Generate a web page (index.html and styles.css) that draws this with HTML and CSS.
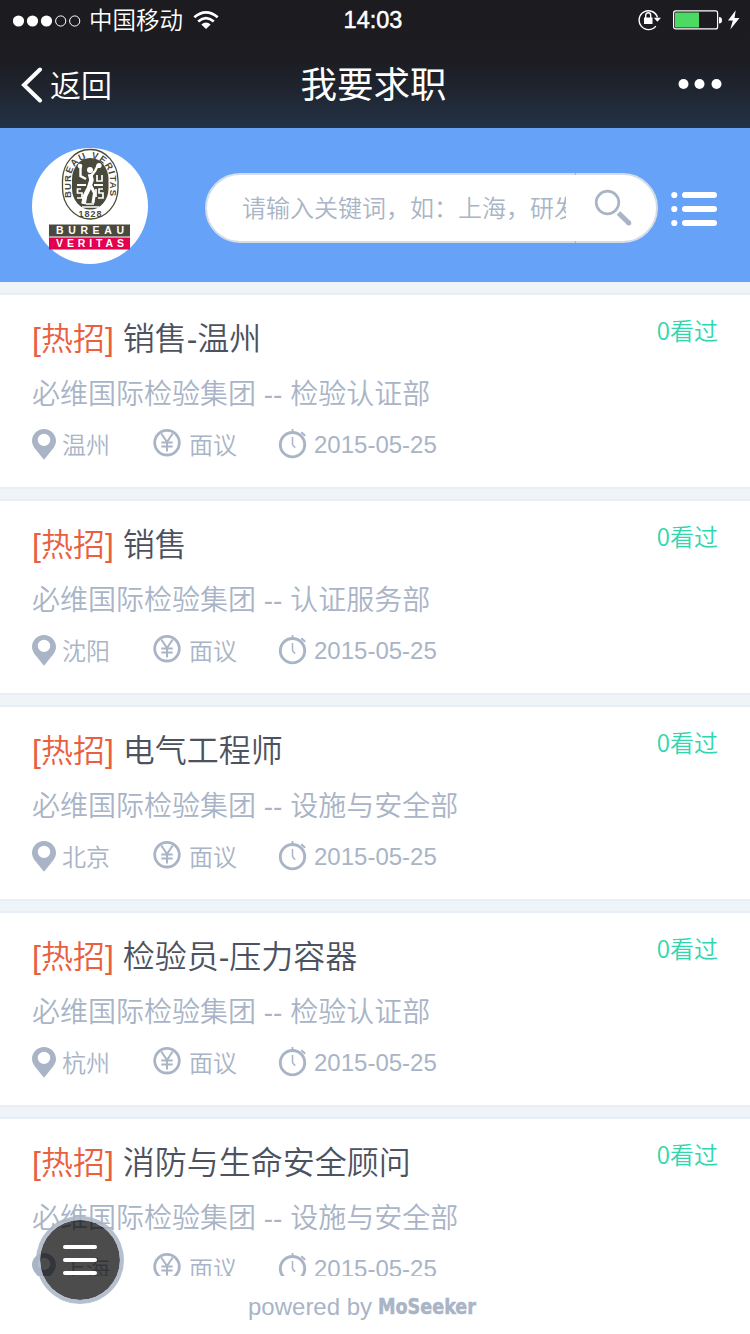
FILE: index.html
```html
<!DOCTYPE html>
<html lang="zh-CN">

<head>
    <meta charset="UTF-8">
    <meta name="viewport" content="width=device-width, initial-scale=1.0">
    <title>我要求职</title>
    <link rel="stylesheet" href="styles.css">
</head>

<body>
    <!-- Shared icons -->
    <svg class="sprite" width="0" height="0">
        <symbol id="pin" viewBox="0 0 24 32">
            <path fill="currentColor" fill-rule="evenodd" d="M12 0C5.400 0 0 5.200 0 11.800C0 14.500 1 17 2.500 19L12 30.800L21.500 19C23 17 24 14.500 24 11.800C24 5.200 18.600 0 12 0ZM12 4.700A6.200 6.200 0 1 1 12 17.100A6.200 6.200 0 1 1 12 4.700Z"/>
        </symbol>
        <symbol id="yen" viewBox="0 0 30 32">
            <circle cx="15" cy="13.700" r="12.300" fill="none" stroke="currentColor" stroke-width="2.800"/>
            <path d="M9.300 4.500L15 13L20.700 4.500M15 13V22.500M9.300 13.500H20.700M9.300 17.500H20.700" fill="none" stroke="currentColor" stroke-width="2"/>
        </symbol>
        <symbol id="clock" viewBox="0 0 30 32">
            <circle cx="14.500" cy="15.700" r="12.200" fill="none" stroke="currentColor" stroke-width="2.900"/>
            <path d="M14.500 0V4" stroke="currentColor" stroke-width="1.800"/>
            <path d="M23.300 3.200L27.200 6.800" stroke="currentColor" stroke-width="1.900"/>
            <path d="M14.500 8V15.200Q14.700 17 17.300 18.700" fill="none" stroke="currentColor" stroke-width="1.500"/>
        </symbol>
    </svg>

    <header class="topbar">
        <div class="status">
            <div class="status-left">
                <svg class="signal" width="68" height="14" viewBox="0 0 68 14">
                    <g fill="#fff">
                        <circle cx="5.500" cy="7" r="5.600"/>
                        <circle cx="19.500" cy="7" r="5.600"/>
                        <circle cx="33.500" cy="7" r="5.600"/>
                    </g>
                    <g fill="none" stroke="#fff">
                        <circle cx="47.700" cy="7" r="5.100"/>
                        <circle cx="61.700" cy="7" r="5.100"/>
                    </g>
                </svg>
                <span class="carrier">中国移动</span>
                <svg class="wifi" width="26" height="20" viewBox="0 0 26 20">
                    <g fill="none" stroke="#fff" stroke-width="2.700">
                        <path d="M1.300 7.300Q13 -2.700 24.700 7.300"/>
                        <path d="M5.200 11.500Q13 4.900 20.800 11.500"/>
                    </g>
                    <path d="M8.300 14.400Q13 10.600 17.700 14.400L13 19Z" fill="#fff"/>
                </svg>
            </div>
            <span class="time">14:03</span>
            <div class="status-right">
                <svg width="25" height="22" viewBox="0 0 25 22">
                    <path d="M17.800 17.100A9.400 9.400 0 1 1 19.500 8.500" fill="none" stroke="#fff" stroke-width="1.400"/>
                    <path d="M15.800 8.700H23L19.400 12.700Z" fill="#fff"/>
                    <rect x="6" y="8.500" width="8.500" height="6.500" fill="#fff"/>
                    <path d="M7.700 9V6.300A2.500 2.500 0 0 1 12.700 6.300V9" fill="none" stroke="#fff" stroke-width="1.400"/>
                </svg>
                <svg width="50" height="20" viewBox="0 0 50 20">
                    <rect x=".6" y=".9" width="44" height="18" rx="2" fill="none" stroke="#fff" stroke-width="1.200"/>
                    <rect x="2" y="2.500" width="24" height="15" fill="#4cd964"/>
                    <path d="M46 7Q49 7 49 10.300Q49 13.500 46 13.500Z" fill="#fff"/>
                </svg>
                <svg width="12" height="20" viewBox="0 0 12 20">
                    <path d="M7.700 .3L0 10.500H4.800L2.300 19.500L11.500 8H6.500Z" fill="#fff"/>
                </svg>
            </div>
        </div>
        <nav class="nav">
            <a class="back">
                <svg width="22" height="36" viewBox="0 0 22 36">
                    <path d="M19 2.500L3 18L19 33.500" fill="none" stroke="#fff" stroke-width="4" stroke-linecap="round"/>
                </svg>
                <span>返回</span>
            </a>
            <h1 class="nav-title">我要求职</h1>
            <svg class="more" width="44" height="12" viewBox="0 0 44 12">
                <g fill="#fff">
                    <circle cx="5.500" cy="6" r="5"/>
                    <circle cx="21.500" cy="6" r="5"/>
                    <circle cx="38.500" cy="6" r="5"/>
                </g>
            </svg>
        </nav>
    </header>

    <section class="search-bar">
        <svg class="logo" width="116" height="116" viewBox="0 0 116 116">
            <defs>
                <path id="arc" d="M39 51V30A19.300 21 0 0 1 77.500 30V51"/>
            </defs>
            <circle cx="58" cy="58" r="58" fill="#fff"/>
            <rect x="30.500" y="1.500" width="55.500" height="69.500" rx="27.500" ry="31" fill="#fff" stroke="#4a4a3c" stroke-width="1.300"/>
            <rect x="40" y="10" width="36.500" height="51.500" rx="18" ry="21" fill="#4a4a3c"/>
            <text class="logo-arc" textLength="98"><textPath href="#arc" startOffset="1" textLength="98">BUREAU VERITAS</textPath></text>
            <g fill="none" stroke="#fff">
                <path d="M45 37H54M62 37H71" stroke-width="2.200"/>
                <path d="M54 31L48.500 28V19M59 28L63 23L66 17" stroke-width="2.400"/>
                <path d="M58 26L59.500 32L57 40L53 48L51.500 56" stroke-width="4.500"/>
                <path d="M59 38L62.500 45L61 55" stroke-width="3"/>
                <path d="M49 41H45.500V45H50V50H45M64 41V49M71 41H67V45H71V50H66M65 27V33H70V27M50 59H67M54 56H62" stroke-width="1.700"/>
            </g>
            <circle cx="58" cy="22" r="3" fill="#fff"/>
            <circle cx="67" cy="17.500" r="2.600" fill="#fff"/>
            <circle cx="48" cy="18" r="2.300" fill="#fff"/>
            <text class="logo-year" x="46.500" y="69" textLength="23">1828</text>
            <rect x="17" y="76.500" width="81" height="12" fill="#4a4a3c"/>
            <rect x="17" y="89.500" width="81" height="12" fill="#e4004f"/>
            <text class="logo-name" x="24" y="86.300" textLength="68">BUREAU</text>
            <text class="logo-name" x="24" y="99.300" textLength="68">VERITAS</text>
        </svg>
        <div class="search">
            <div class="search-input">请输入关键词，如：上海，研发</div>
            <div class="search-btn">
                <svg width="40" height="40" viewBox="0 0 40 40">
                    <circle cx="13.500" cy="13.500" r="11.300" fill="none" stroke="#a9b4c6" stroke-width="2.700"/>
                    <path d="M24.500 24L34.800 34" stroke="#a9b4c6" stroke-width="5"/>
                    <circle cx="34.800" cy="34" r="2.500" fill="#a9b4c6"/>
                </svg>
            </div>
        </div>
        <svg class="list-icon" width="47" height="36" viewBox="0 0 47 36">
            <g fill="#fff">
                <circle cx="3.300" cy="4" r="3.100"/>
                <circle cx="3.300" cy="18" r="3.100"/>
                <circle cx="3.300" cy="32" r="3.100"/>
                <rect x="11" y="1" width="35" height="6" rx="3"/>
                <rect x="11" y="15" width="35" height="6" rx="3"/>
                <rect x="11" y="29" width="35" height="6" rx="3"/>
            </g>
        </svg>
    </section>

    <main class="jobs">
        <article class="job">
            <div class="job-head">
                <h2><span class="hot">[热招]</span> 销售-温州</h2>
                <span class="views">0看过</span>
            </div>
            <p class="dept">必维国际检验集团 -- 检验认证部</p>
            <div class="meta">
                <span class="place"><svg><use href="#pin"/></svg><b>温州</b></span>
                <span class="salary"><svg><use href="#yen"/></svg><b>面议</b></span>
                <span class="date"><svg><use href="#clock"/></svg>2015-05-25</span>
            </div>
        </article>
        <article class="job">
            <div class="job-head">
                <h2><span class="hot">[热招]</span> 销售</h2>
                <span class="views">0看过</span>
            </div>
            <p class="dept">必维国际检验集团 -- 认证服务部</p>
            <div class="meta">
                <span class="place"><svg><use href="#pin"/></svg><b>沈阳</b></span>
                <span class="salary"><svg><use href="#yen"/></svg><b>面议</b></span>
                <span class="date"><svg><use href="#clock"/></svg>2015-05-25</span>
            </div>
        </article>
        <article class="job">
            <div class="job-head">
                <h2><span class="hot">[热招]</span> 电气工程师</h2>
                <span class="views">0看过</span>
            </div>
            <p class="dept">必维国际检验集团 -- 设施与安全部</p>
            <div class="meta">
                <span class="place"><svg><use href="#pin"/></svg><b>北京</b></span>
                <span class="salary"><svg><use href="#yen"/></svg><b>面议</b></span>
                <span class="date"><svg><use href="#clock"/></svg>2015-05-25</span>
            </div>
        </article>
        <article class="job">
            <div class="job-head">
                <h2><span class="hot">[热招]</span> 检验员-压力容器</h2>
                <span class="views">0看过</span>
            </div>
            <p class="dept">必维国际检验集团 -- 检验认证部</p>
            <div class="meta">
                <span class="place"><svg><use href="#pin"/></svg><b>杭州</b></span>
                <span class="salary"><svg><use href="#yen"/></svg><b>面议</b></span>
                <span class="date"><svg><use href="#clock"/></svg>2015-05-25</span>
            </div>
        </article>
        <article class="job">
            <div class="job-head">
                <h2><span class="hot">[热招]</span> 消防与生命安全顾问</h2>
                <span class="views">0看过</span>
            </div>
            <p class="dept">必维国际检验集团 -- 设施与安全部</p>
            <div class="meta">
                <span class="place"><svg><use href="#pin"/></svg><b>上海</b></span>
                <span class="salary"><svg><use href="#yen"/></svg><b>面议</b></span>
                <span class="date"><svg><use href="#clock"/></svg>2015-05-25</span>
            </div>
        </article>
    </main>

    <footer class="footer">
        <span>powered by</span>
        <svg class="brand" width="100" height="28" viewBox="0 0 100 28">
            <text x="0" y="21" textLength="98" lengthAdjust="spacingAndGlyphs">MoSeeker</text>
        </svg>
    </footer>

    <!-- Floating menu button -->
    <div class="menu-btn">
        <span></span>
        <span></span>
        <span></span>
    </div>
</body>

</html>
```

FILE: styles.css
```css
* {
    box-sizing: border-box;
}

body {
    margin: 0;
    height: 1334px;
    display: flex;
    flex-direction: column;
    overflow: hidden;
    background: #fff;
    color: #a9b4c6;
    font-family: "Liberation Sans", "Noto Sans CJK SC", sans-serif;
    font-weight: 350;
}

svg {
    display: block;
    flex: none;
}

h1, h2, p {
    margin: 0;
    font-weight: 350;
}

.sprite {
    position: absolute;
}

/* Top bar */
.topbar {
    height: 128px;
    flex: none;
    color: #fff;
    background: linear-gradient(to bottom, #1c1b20 0, #1c1c21 56px, #1e232c 84px, #233247 128px);
}

.status {
    height: 41px;
    padding: 0 10px 0 13px;
    display: grid;
    grid-template-columns: 1fr auto 1fr;
    align-items: center;
}

.status-left {
    display: flex;
    align-items: center;
}

.carrier {
    margin: 0 10px 0 8px;
    padding-top: 1px;
    font-size: 23.5px;
    line-height: 40px;
}

.wifi {
    margin-top: -1px;
}

.time {
    margin-right: 7px;
    font-size: 23.5px;
    -webkit-text-stroke: 0.5px #fff;
}

.status-right {
    display: flex;
    align-items: center;
    justify-content: flex-end;
    gap: 5px;
}

.status-right svg {
    margin-top: -1px;
}

.status-right svg:first-child {
    margin-right: 5px;
}

.nav {
    height: 87px;
    padding: 0 28px 0 21px;
    display: grid;
    grid-template-columns: 1fr auto 1fr;
    align-items: center;
}

.back {
    display: flex;
    align-items: center;
    gap: 7px;
    font-size: 31px;
}

.back span {
    padding-bottom: 3px;
}

.nav-title {
    padding: 3px 0 0 4px;
    font-size: 36.5px;
    line-height: 50px;
    font-weight: 400;
}

.more {
    justify-self: end;
    margin-top: -2px;
}

/* Search */
.search-bar {
    height: 154px;
    flex: none;
    padding: 2px 32px 0;
    display: flex;
    align-items: center;
    background: #65a2f8;
}

.logo {
    margin-top: -1px;
}

.logo text {
    font-family: "Liberation Sans", sans-serif;
    font-weight: bold;
}

.logo-arc {
    font-size: 9.5px;
    fill: #4a4a3c;
}

.logo-year {
    font-size: 9px;
    fill: #4a4a3c;
}

.logo-name {
    font-size: 10.5px;
    fill: #fff;
}

.search {
    width: 453px;
    height: 70px;
    margin: 4px 13px 0 57px;
    display: flex;
    border: 2px solid #d5dce8;
    border-radius: 35px;
    background: #fff;
}

.search-input {
    width: 324px;
    margin: 0 9px 0 35px;
    padding-top: 1px;
    overflow: hidden;
    white-space: nowrap;
    font-size: 24px;
    line-height: 66px;
}

.search-btn {
    position: relative;
    flex: 1;
    padding: 14px 0 0 19px;
}

/* seam between the input and the button */
.search-btn::before {
    content: "";
    position: absolute;
    top: -2px;
    bottom: -2px;
    left: 0;
    width: 1px;
    border: solid #8fb9f5;
    border-width: 2px 0;
}

.list-icon {
    margin-top: 5px;
}

/* Job list */
.jobs {
    flex: 1;
    min-height: 0;
    padding-top: 11px;
    overflow: hidden;
    background: #eff4f8;
}

.job {
    height: 196px;
    margin-bottom: 10px;
    padding: 22px 32px 0;
    border-top: 2px solid #e7eef5;
    border-bottom: 2px solid #e7eef5;
    background: #fff;
}

.job-head {
    display: flex;
    justify-content: space-between;
}

.job h2 {
    color: #4c5260;
    font-size: 32px;
    line-height: 44px;
}

.job .hot {
    color: #e9603f;
}

.views {
    margin-top: -2px;
    color: #30d6ad;
    font-family: "Noto Sans CJK SC", sans-serif;
    font-size: 24px;
    line-height: 30px;
}

.dept {
    margin-top: 14px;
    font-size: 28px;
    line-height: 40px;
}

.meta {
    height: 40px;
    margin-top: 10px;
    display: grid;
    grid-template-columns: 120px 126px auto;
    font-size: 24px;
}

.meta span {
    display: flex;
    align-items: center;
}

.meta b {
    padding-bottom: 4px;
    font-weight: 350;
}

.meta svg {
    width: 30px;
    height: 32px;
    margin-right: 6px;
}

.meta .place svg {
    width: 24px;
}

.meta .salary svg {
    margin-right: 7px;
}

/* Footer */
.footer {
    height: 58px;
    flex: none;
    padding: 3px 0 0 248px;
    display: flex;
    align-items: center;
    gap: 6px;
    background: #fff;
    font-size: 24px;
}

.brand text {
    font-family: "Liberation Sans Narrow", "DejaVu Sans Condensed", sans-serif;
    font-size: 21px;
    font-weight: bold;
    fill: #a9b4c6;
    stroke: #a9b4c6;
    stroke-width: 0.5px;
}

.menu-btn {
    position: fixed;
    left: 36px;
    bottom: 30px;
    width: 88px;
    height: 88px;
    display: flex;
    flex-direction: column;
    align-items: center;
    justify-content: center;
    gap: 9px;
    border: 4px solid rgba(169, 180, 198, 0.85);
    border-radius: 50%;
    background: rgba(0, 0, 0, 0.7);
    background-clip: padding-box;
}

.menu-btn span {
    width: 34px;
    height: 4px;
    border-radius: 2px;
    background: #fff;
}
```
